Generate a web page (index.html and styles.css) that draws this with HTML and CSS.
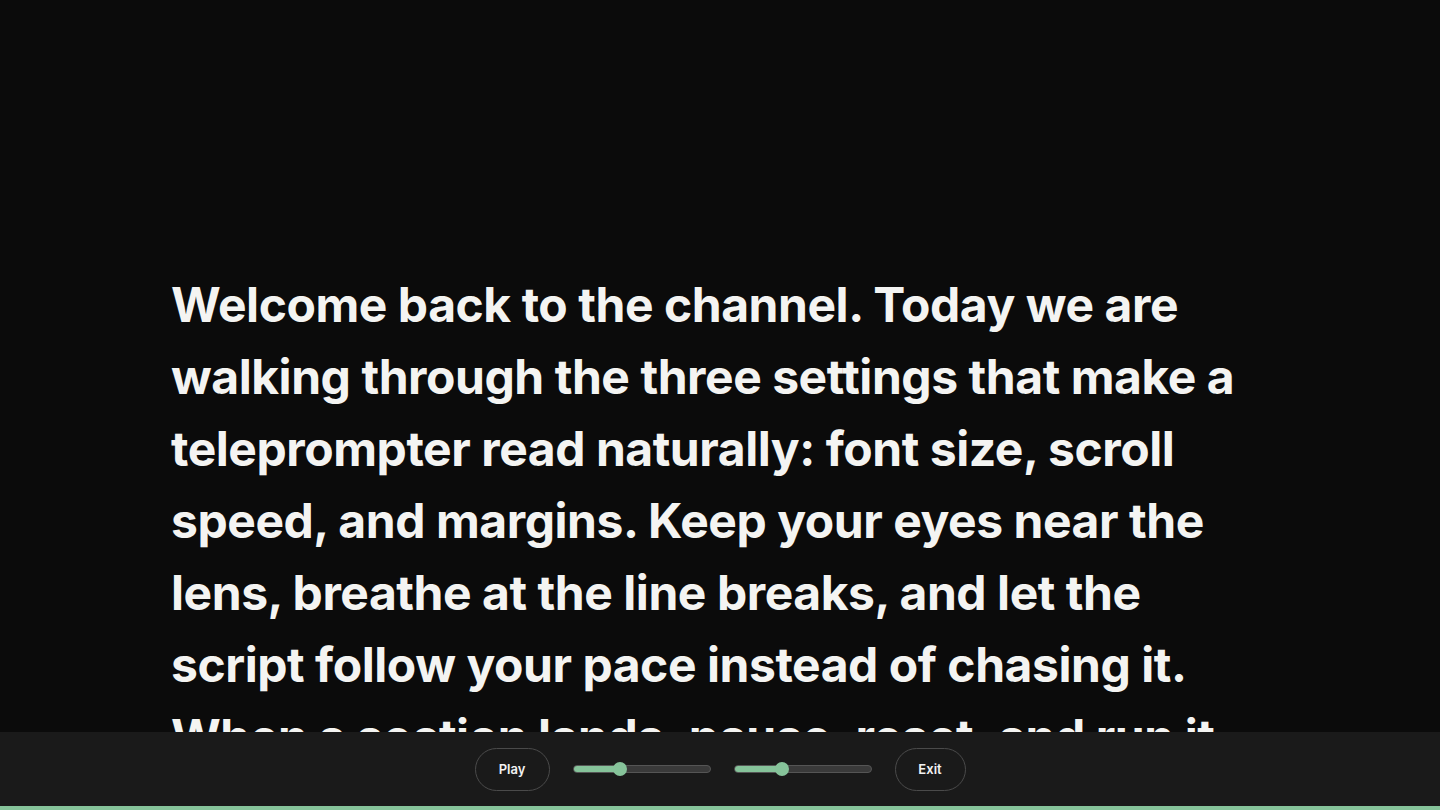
FILE: index.html
```html
<!DOCTYPE html>
<html lang="en">
<head>
<meta charset="utf-8">
<title>Teleprompter</title>
<link rel="stylesheet" href="styles.css">
</head>
<body>
<div class="app">
  <main class="stage">
    <p class="script">Welcome back to the channel. Today we are walking through the three settings that make a teleprompter read naturally: font size, scroll speed, and margins. Keep your eyes near the lens, breathe at the line breaks, and let the script follow your pace instead of chasing it. When a section lands, pause, reset, and run it again until it feels like a conversation.</p>
  </main>
  <footer class="controls">
    <button class="pill play">Play</button>
    <div class="slider"><div class="fill" style="width:34%"></div><div class="thumb" style="left:34%"></div></div>
    <div class="slider"><div class="fill" style="width:35%"></div><div class="thumb" style="left:35%"></div></div>
    <button class="pill exit">Exit</button>
  </footer>
  <div class="progress"></div>
</div>
</body>
</html>
```
FILE: styles.css
```css
* { box-sizing: border-box; }
html, body { margin: 0; padding: 0; height: 100%; background: #0b0b0b; }
.app { height: 810px; display: flex; flex-direction: column; overflow: hidden; }
.stage { height: 732px; overflow: hidden; padding: 269px 170px 0 171px; }
.script {
  margin: 0;
  font-family: Inter, "Noto Sans", sans-serif;
  font-weight: 700;
  font-size: 48px;
  line-height: 72px;
  letter-spacing: -0.45px;
  color: #f4f4f2;
  max-width: 1100px;
}
.controls {
  height: 74px;
  background: #1a1a1a;
  display: flex;
  align-items: center;
  justify-content: center;
  gap: 23px;
}
.pill {
  height: 43px;
  border-radius: 22px;
  border: 1px solid #4a4a4a;
  background: transparent;
  color: #f2f2f2;
  font-family: Inter, sans-serif;
  font-weight: 600;
  font-size: 13px;
  padding: 0;
}
.play { width: 75px; }
.exit { width: 71px; }
.slider {
  position: relative;
  width: 138px;
  height: 8px;
  border-radius: 4px;
  background: #3a3a3a;
  border: 1px solid #555;
}
.fill {
  height: 100%;
  background: #86c39a;
  border-radius: 4px 0 0 4px;
}
.thumb {
  position: absolute;
  top: 50%;
  width: 14px;
  height: 14px;
  margin: -7px 0 0 -7px;
  border-radius: 50%;
  background: #86c39a;
}
.progress { height: 4px; background: #86c39a; }
```
